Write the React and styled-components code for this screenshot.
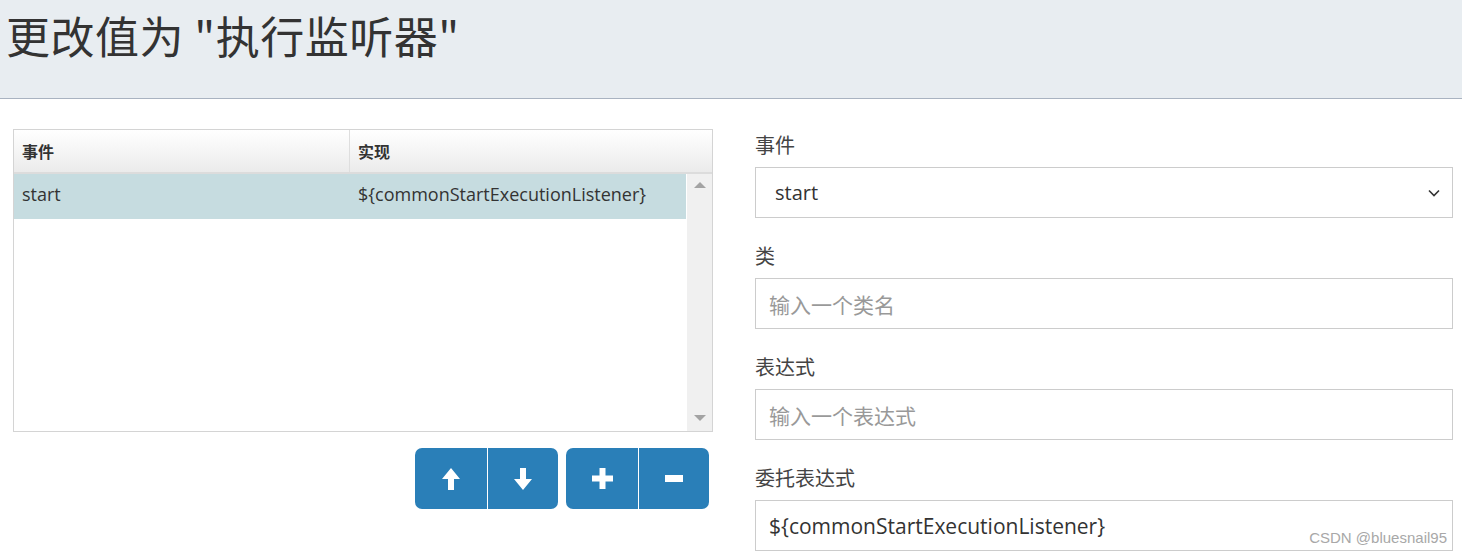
import React from "react";
import styled, { createGlobalStyle } from "styled-components";

const GlobalStyle = createGlobalStyle`
  html, body { margin: 0; padding: 0; background: #ffffff; }
  body {
    font-family: "Open Sans", "Noto Sans CJK SC", sans-serif;
    color: #333;
    width: 1462px;
    height: 552px;
    overflow: hidden;
  }
  * { box-sizing: border-box; }
`;

const Page = styled.div`
  position: relative;
  width: 1462px;
  height: 552px;
  overflow: hidden;
`;

const Header = styled.header`
  height: 99px;
  background: #e8edf1;
  border-bottom: 1px solid #a9b3c1;
  padding: 8px 0 0 6px;
`;

const Title = styled.h1`
  margin: 0;
  font-family: "Noto Sans CJK SC", sans-serif;
  font-weight: 400;
  font-size: 44px;
  line-height: 54px;
  color: #333;
  letter-spacing: 0.5px;
`;

const Body = styled.div`
  display: flex;
  gap: 42px;
  padding: 30px 0 0 13px;
`;

const LeftPanel = styled.div`
  width: 700px;
  display: flex;
  flex-direction: column;
`;

const Grid = styled.div`
  height: 303px;
  border: 1px solid #d4d4d4;
  display: flex;
  flex-direction: column;
`;

const GridHead = styled.div`
  display: flex;
  height: 44px;
  background: linear-gradient(#ffffff, #ebebeb);
  border-bottom: 2px solid #dcdcdc;
`;

const HeadCell = styled.div`
  width: ${(p) => p.$w};
  flex: ${(p) => (p.$w ? "none" : "1")};
  padding-left: 8px;
  display: flex;
  align-items: center;
  font-family: "Noto Sans CJK SC", sans-serif;
  font-weight: 700;
  font-size: 16px;
  color: #333;
  border-right: ${(p) => (p.$w ? "1px solid #dedede" : "none")};
`;

const GridBody = styled.div`
  flex: 1;
  display: flex;
`;

const Rows = styled.div`
  flex: 1;
`;

const Row = styled.div`
  display: flex;
  height: 45px;
  padding-bottom: 5px;
  background: ${(p) => (p.$selected ? "#c6dce0" : "transparent")};
`;

const Cell = styled.div`
  width: ${(p) => p.$w};
  flex: ${(p) => (p.$w ? "none" : "1")};
  padding-left: 8px;
  display: flex;
  align-items: center;
  font-size: 18px;
  color: #333;
`;

const ScrollBar = styled.div`
  width: 26px;
  background: #f0f0f0;
  border-left: 1px solid #ffffff;
  display: flex;
  flex-direction: column;
  justify-content: space-between;
  align-items: center;
  padding: 8px 0 10px;
`;

const ScrollArrow = styled.div`
  width: 0;
  height: 0;
  border-left: 6px solid transparent;
  border-right: 6px solid transparent;
  ${(p) =>
    p.$down
      ? "border-top: 6px solid #a3a3a3;"
      : "border-bottom: 6px solid #a3a3a3;"}
`;

const Toolbar = styled.div`
  display: flex;
  justify-content: flex-end;
  gap: 8px;
  margin-top: 16px;
  padding-right: 4px;
`;

const BtnGroup = styled.div`
  display: flex;
  border-radius: 7px;
  overflow: hidden;
`;

const Btn = styled.button`
  width: ${(p) => p.$w || 72}px;
  height: 61px;
  border: none;
  margin: 0;
  padding: 0;
  background: #2a7fb8;
  display: flex;
  align-items: center;
  justify-content: center;
  & + & {
    border-left: 1px solid #ffffff;
  }
`;

const RightPanel = styled.div`
  width: 698px;
  padding-top: 2px;
`;

const Field = styled.div`
  margin-bottom: 24px;
`;

const Label = styled.label`
  display: block;
  font-family: "Noto Sans CJK SC", sans-serif;
  font-size: 20px;
  line-height: 28px;
  color: #444;
  margin-bottom: 8px;
`;

const SelectBox = styled.div`
  height: 51px;
  border: 1px solid #cccccc;
  display: flex;
  align-items: center;
  justify-content: space-between;
  padding: 0 12px 0 19px;
  font-size: 20px;
  color: #333;
`;

const Input = styled.div`
  height: 51px;
  border: 1px solid #cccccc;
  display: flex;
  align-items: center;
  padding: 0 13px;
  font-family: "Open Sans", "Noto Sans CJK SC", sans-serif;
  font-size: 21px;
  color: ${(p) => (p.$placeholder ? "#999" : "#333")};
`;

const Watermark = styled.div`
  position: absolute;
  right: 15px;
  bottom: 6px;
  font-family: "Liberation Sans", sans-serif;
  font-size: 15px;
  color: #a8a8a8;
`;

const ArrowIcon = ({ down }) => (
  <svg width="18" height="22" viewBox="0 0 18 22" style={down ? { transform: "rotate(180deg)" } : undefined}>
    <path d="M9 0 L18 11 L12 11 L12 22 L6 22 L6 11 L0 11 Z" fill="#fff" />
  </svg>
);

const PlusIcon = () => (
  <svg width="21" height="21" viewBox="0 0 21 21">
    <path d="M7.5 0 H13.5 V7.5 H21 V13.5 H13.5 V21 H7.5 V13.5 H0 V7.5 H7.5 Z" fill="#fff" />
  </svg>
);

const MinusIcon = () => (
  <svg width="18" height="7" viewBox="0 0 18 7">
    <rect x="0" y="0" width="18" height="7" fill="#fff" />
  </svg>
);

const Chevron = () => (
  <svg width="12" height="8" viewBox="0 0 12 8">
    <path d="M1 1.5 L6 6.5 L11 1.5" fill="none" stroke="#333" strokeWidth="1.6" />
  </svg>
);

export default function App() {
  return (
    <Page>
      <GlobalStyle />
      <Header>
        <Title>更改值为 "执行监听器"</Title>
      </Header>
      <Body>
        <LeftPanel>
          <Grid>
            <GridHead>
              <HeadCell $w="336px">事件</HeadCell>
              <HeadCell>实现</HeadCell>
            </GridHead>
            <GridBody>
              <Rows>
                <Row $selected>
                  <Cell $w="336px">start</Cell>
                  <Cell>{"${commonStartExecutionListener}"}</Cell>
                </Row>
              </Rows>
              <ScrollBar>
                <ScrollArrow />
                <ScrollArrow $down />
              </ScrollBar>
            </GridBody>
          </Grid>
          <Toolbar>
            <BtnGroup>
              <Btn $w={72}><ArrowIcon /></Btn>
              <Btn $w={71}><ArrowIcon down /></Btn>
            </BtnGroup>
            <BtnGroup>
              <Btn $w={72}><PlusIcon /></Btn>
              <Btn $w={71}><MinusIcon /></Btn>
            </BtnGroup>
          </Toolbar>
        </LeftPanel>
        <RightPanel>
          <Field>
            <Label>事件</Label>
            <SelectBox>
              <span>start</span>
              <Chevron />
            </SelectBox>
          </Field>
          <Field>
            <Label>类</Label>
            <Input $placeholder>输入一个类名</Input>
          </Field>
          <Field>
            <Label>表达式</Label>
            <Input $placeholder>输入一个表达式</Input>
          </Field>
          <Field>
            <Label>委托表达式</Label>
            <Input>{"${commonStartExecutionListener}"}</Input>
          </Field>
        </RightPanel>
      </Body>
      <Watermark>CSDN @bluesnail95</Watermark>
    </Page>
  );
}
